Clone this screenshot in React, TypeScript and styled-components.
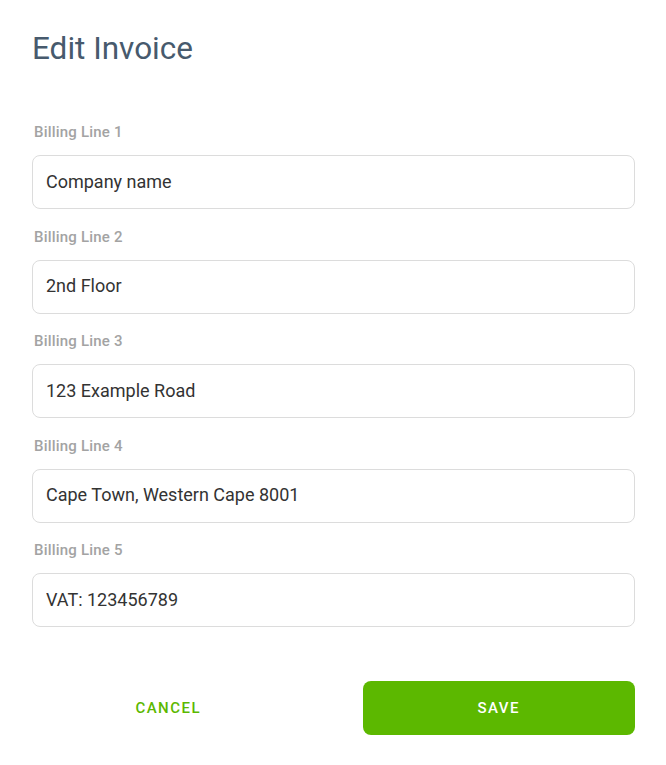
import styled, { createGlobalStyle } from 'styled-components';

const GlobalStyle = createGlobalStyle`
  body {
    margin: 0;
    background: #fff;
    font-family: Roboto, "Liberation Sans", sans-serif;
  }
`;

const Dialog = styled.div`
  width: 666px;
  box-sizing: border-box;
  padding: 29px 31px 30px 32px;
`;

const Title = styled.h1`
  margin: 0 0 53px;
  font-size: 31.5px;
  line-height: 40px;
  font-weight: 400;
  color: #475a6d;
`;

const Fields = styled.div`
  display: flex;
  flex-direction: column;
  gap: 17.5px;
`;

const Field = styled.label`
  display: flex;
  flex-direction: column;
  gap: 13px;
`;

const Label = styled.span`
  padding-left: 2px;
  font-size: 15px;
  line-height: 20px;
  font-weight: 500;
  letter-spacing: 0.2px;
  color: #a3a3a3;
`;

const Input = styled.input`
  height: 54px;
  box-sizing: border-box;
  padding: 0 13px 2px;
  border: 1px solid #dcdcdc;
  border-radius: 8px;
  font-family: inherit;
  font-size: 18px;
  color: #333;
  outline: none;
`;

const Actions = styled.div`
  display: grid;
  grid-template-columns: 1fr 1fr;
  gap: 58px;
  margin-top: 54px;
`;

const Button = styled.button<{ $primary?: boolean }>`
  height: 54px;
  border: none;
  border-radius: 8px;
  font-family: inherit;
  font-size: 15px;
  font-weight: 500;
  letter-spacing: 1.5px;
  text-transform: uppercase;
  cursor: pointer;
  background: ${(p) => (p.$primary ? '#5cb800' : 'transparent')};
  color: ${(p) => (p.$primary ? '#fff' : '#5cb800')};
`;

const lines = [
  'Company name',
  '2nd Floor',
  '123 Example Road',
  'Cape Town, Western Cape 8001',
  'VAT: 123456789',
];

const App = () => (
  <>
    <GlobalStyle />
    <Dialog>
      <Title>Edit Invoice</Title>
      <Fields>
        {lines.map((value, i) => (
          <Field key={i}>
            <Label>Billing Line {i + 1}</Label>
            <Input defaultValue={value} />
          </Field>
        ))}
      </Fields>
      <Actions>
        <Button>Cancel</Button>
        <Button $primary>Save</Button>
      </Actions>
    </Dialog>
  </>
);

export default App;
